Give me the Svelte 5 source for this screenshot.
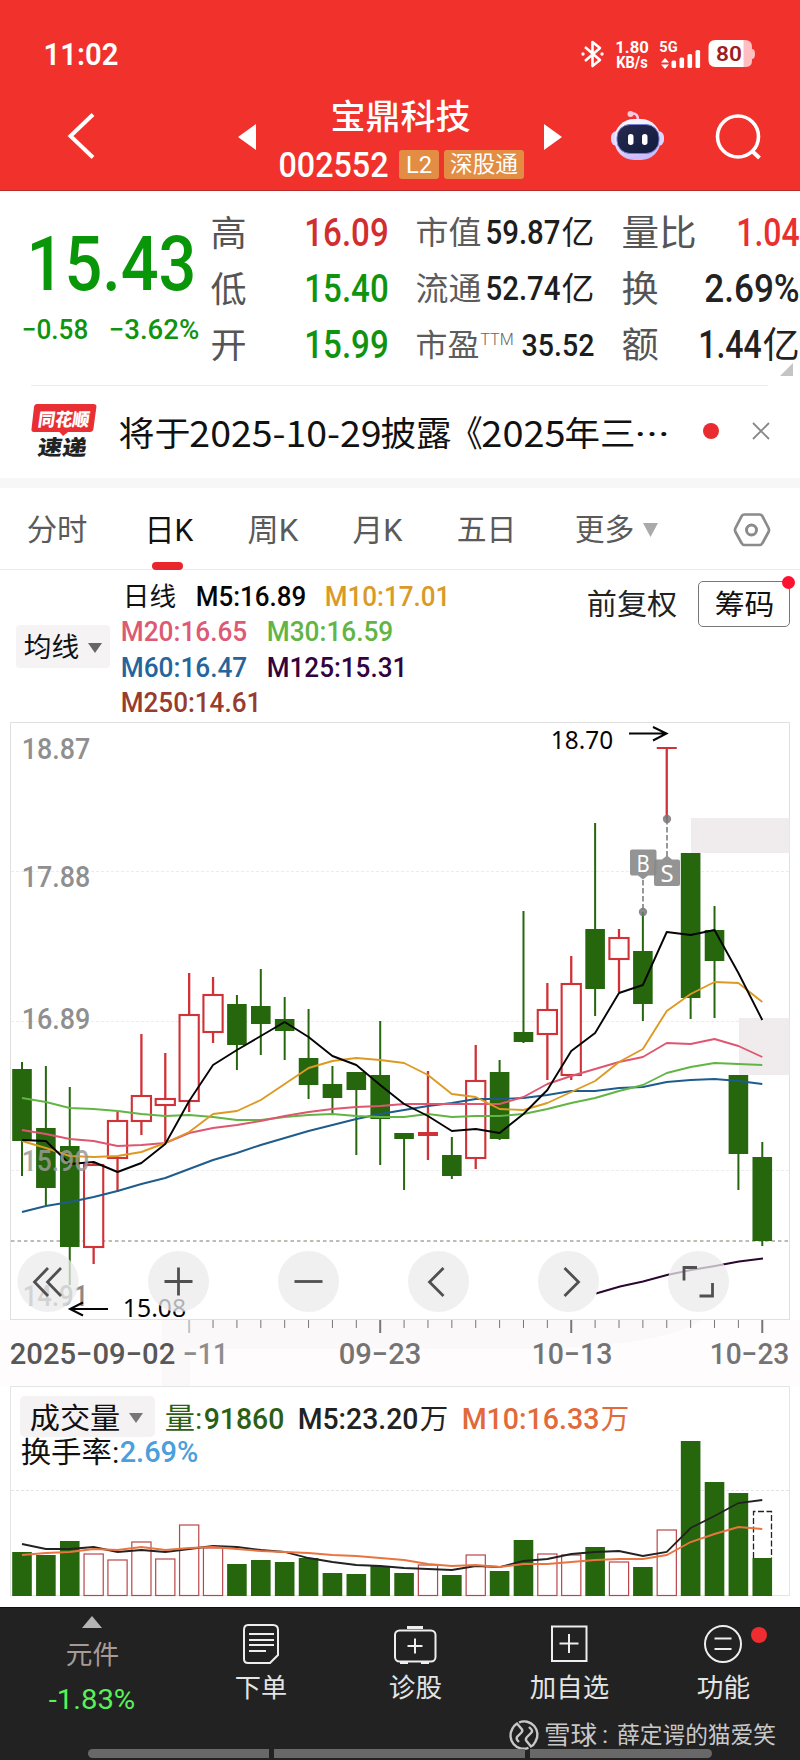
<script>
  const G = '#26670e';
  const R = '#cf3338';
  const cx = (i) => 22 + 23.88 * i;

  // kind, high, body top, body bottom, low
  const candles = [
    ['g', 1062, 1069, 1141, 1176], ['g', 1066, 1128, 1188, 1205], ['g', 1087, 1146, 1247, 1285],
    ['r', 1163, 1165, 1247, 1264], ['r', 1112, 1121, 1158, 1192], ['r', 1034, 1096, 1121, 1135],
    ['r', 1053, 1099, 1105, 1142], ['r', 973, 1015, 1101, 1112], ['r', 977, 995, 1032, 1043],
    ['g', 995, 1004, 1045, 1070], ['g', 969, 1006, 1024, 1055], ['g', 997, 1019, 1031, 1060],
    ['g', 1009, 1058, 1085, 1099], ['g', 1066, 1084, 1098, 1113], ['g', 1072, 1072, 1090, 1155],
    ['g', 1021, 1075, 1119, 1165], ['g', 1133, 1133, 1139, 1190], ['d', 1071, 1132, 1136, 1160],
    ['g', 1137, 1155, 1176, 1179], ['r', 1045, 1081, 1158, 1169], ['g', 1060, 1072, 1139, 1140],
    ['g', 911, 1032, 1042, 1043], ['r', 983, 1010, 1034, 1080], ['r', 956, 984, 1075, 1080],
    ['g', 823, 929, 989, 1016], ['r', 929, 938, 959, 992], ['g', 912, 951, 1004, 1021],
    ['d', 748, 747, 749, 819], ['g', 853, 853, 998, 1019], ['g', 906, 930, 961, 1018],
    ['g', 1075, 1075, 1154, 1190], ['g', 1142, 1157, 1241, 1246]
  ];
  const averages = [
    ['#1d5c8c', [1212,1206,1202,1197,1191,1184,1178,1169,1160,1153,1145,1138,1131,1125,1119,1114,1110,1106,1103,1099,1099,1098,1095,1091,1091,1088,1087,1082,1080,1079,1081,1084]],
    ['#62b544', [1098,1102,1108,1109,1111,1114,1116,1115,1117,1120,1120,1117,1115,1114,1116,1117,1117,1114,1117,1116,1116,1114,1109,1103,1098,1091,1085,1073,1067,1063,1064,1065]],
    ['#de5670', [1130,1134,1139,1141,1146,1145,1143,1133,1128,1125,1121,1116,1112,1109,1107,1106,1104,1104,1104,1104,1104,1097,1084,1076,1069,1062,1057,1043,1044,1039,1046,1057]],
    ['#dc9a22', [1141,1148,1156,1157,1156,1152,1143,1132,1114,1111,1100,1084,1068,1061,1058,1060,1063,1075,1094,1097,1109,1110,1103,1092,1081,1062,1049,1011,994,982,983,1002]],
    ['#050505', [1140,1141,1164,1162,1172,1163,1144,1101,1065,1050,1036,1022,1037,1056,1065,1085,1104,1116,1131,1129,1133,1114,1090,1051,1033,993,985,932,935,930,973,1020]]
  ];
  const volumes = [1552,1555,1541,1554,1560,1542,1559,1525,1548,1564,1560,1562,1558,1573,1574,1566,1573,1565,1575,1555,1571,1540,1554,1555,1547,1562,1567,1530,1441,1482,1493,1558];
  const vma5 = [1544,1549,1549,1547,1552,1550,1552,1549,1546,1547,1550,1552,1558,1562,1565,1566,1568,1569,1570,1566,1567,1561,1559,1554,1552,1551,1556,1552,1528,1516,1503,1500];
  const vma10 = [1555,1553,1552,1549,1550,1547,1550,1548,1547,1549,1551,1552,1553,1555,1556,1558,1560,1564,1566,1565,1567,1564,1564,1562,1560,1559,1559,1555,1542,1534,1527,1529];
  const line = (a) => a.map((y, i) => `${cx(i)},${y}`).join(' ');
  const ticks = Array.from({ length: 25 }, (_, k) => k + 7);
  const buttons = [48, 178.5, 308.5, 438.5, 568.5, 698.5];
  const weightOf = (text) => (/\d/.test(text) ? 500 : 400);
</script>

{#snippet T(text, w, fs, fill = '#222', weight = weightOf(text), x = 0, base = 0, family = 'Roboto, "Noto Sans CJK SC", sans-serif')}
  <svg class="t" {x} y={base - fs * 0.711} width={w} height={fs * 0.711}>
    <text x={-fs * 0.045} y={fs * 0.711} textLength={w + fs * 0.09} lengthAdjust="spacingAndGlyphs"
      font-size={fs} {fill} font-weight={weight} font-family={family}>{text}</text>
  </svg>
{/snippet}

<div class="screen">
  <header>
    <div class="status">
      {@render T('11:02', 72, 31, '#fff', 600)}
      <svg width="180" height="30" viewBox="577 39 180 30">
        <path d="M585 47l15 13-7.500 6V42l7.500 6-15 13" fill="none" stroke="#fff" stroke-width="2.600" stroke-linejoin="round" />
        <circle cx="583" cy="54" r="1.700" fill="#fff" /><circle cx="602" cy="54" r="1.700" fill="#fff" />
        {@render T('1.80', 32, 16.5, '#fff', 700, 616, 53)}
        {@render T('KB/s', 30, 16, '#fff', 700, 617, 68)}
        {@render T('5G', 17, 15, '#fff', 700, 660, 51.5)}
        <path d="M661 62.500l4-4.500 4 4.500zM661 64.500h8l-4 4.500z" fill="#fff" />
        <rect x="671.500" y="60.500" width="4.600" height="7.500" rx="1.500" fill="#fff" />
        <rect x="679.500" y="57.500" width="4.600" height="10.500" rx="1.500" fill="#fff" />
        <rect x="687.500" y="54" width="4.600" height="14" rx="1.500" fill="#fff" />
        <rect x="695.500" y="50" width="4.600" height="18" rx="1.500" fill="#fff" />
        <path d="M743 40h2q7 0 7 7v14q0 6-7 6h-2zM752 49q3 0 3 5t-3 5z" fill="#ffbfc0" />
        <path d="M743.500 40h-28q-7 0-7 7v13q0 7 7 7h28z" fill="#fff" />
        {@render T('80', 24, 21, '#9c201e', 600, 717, 61)}
      </svg>
    </div>
    <div class="nav">
      <svg width="30" height="50" viewBox="65 111 30 50"><path d="M92 114.500L69.500 136 92 157.500" fill="none" stroke="#fff" stroke-width="4" /></svg>
      <svg class="prev" width="18" height="28"><path d="M0 14L18 1v26z" fill="#fff" /></svg>
      <div class="name">
        {@render T('宝鼎科技', 137, 34, '#fff', 500)}
        <div class="code">
          {@render T('002552', 107, 35, '#fff', 500)}
          <span class="tag l2">{@render T('L2', 24, 24, '#fff', 400)}</span>
          <span class="tag hk">{@render T('深股通', 66, 22.5, '#fff')}</span>
        </div>
      </div>
      <svg class="next" width="18" height="28"><path d="M18 14L0 1v26z" fill="#fff" /></svg>
      <svg class="robot" width="54" height="50" viewBox="611 111 54 50">
        <defs>
          <linearGradient id="shell" x1="0" y1="0" x2="0.300" y2="1"><stop offset="0" stop-color="#fff" /><stop offset="0.600" stop-color="#e6defb" /><stop offset="1" stop-color="#cbbcfb" /></linearGradient>
          <linearGradient id="visor" x1="0" y1="0" x2="1" y2="1"><stop offset="0" stop-color="#272b50" /><stop offset="1" stop-color="#101b3c" /></linearGradient>
        </defs>
        <path d="M630 114q8-2 8 6" fill="none" stroke="#f5c8e8" stroke-width="2.500" />
        <circle cx="630.500" cy="114" r="3" fill="#ffc7da" />
        <rect x="611" y="131" width="53" height="15" rx="6" fill="#dcd6ff" />
        <rect x="614.500" y="119" width="46" height="41" rx="19.500" fill="url(#shell)" />
        <rect x="617" y="124.500" width="42" height="29" rx="13" fill="url(#visor)" stroke="#7780d8" />
        <rect x="628" y="134" width="5.500" height="11" rx="2.700" fill="#fff" />
        <rect x="642" y="134" width="5.500" height="11" rx="2.700" fill="#fff" />
      </svg>
      <svg class="search" width="46" height="46" viewBox="714 115 46 46"><circle cx="737" cy="136.500" r="20.500" fill="none" stroke="#fff" stroke-width="3.600" /><path d="M751 151l7.500 7" stroke="#fff" stroke-width="4" /></svg>
    </div>
  </header>

  <section class="quote">
    <div class="price">
      {@render T('15.43', 163, 75.5, '#099709', 500)}
      <div class="delta">{@render T('−0.58', 64, 28, '#109410')}{@render T('−3.62%', 88, 28, '#109410')}</div>
    </div>
    <div class="col ohl">
      <div>{@render T('高', 33, 35, '#555')}{@render T('16.09', 81, 38, '#d22e30')}</div>
      <div>{@render T('低', 33, 35, '#555')}{@render T('15.40', 81, 38, '#109410')}</div>
      <div>{@render T('开', 33, 35, '#555')}{@render T('15.99', 81, 38, '#109410')}</div>
    </div>
    <div class="col cap">
      <div>{@render T('市值', 63, 32, '#5c5c5c')}<span>{@render T('59.87', 72, 33, '#1d1d1d')}{@render T('亿', 30, 32, '#1d1d1d')}</span></div>
      <div>{@render T('流通', 63, 32, '#5c5c5c')}<span>{@render T('52.74', 72, 33, '#1d1d1d')}{@render T('亿', 30, 32, '#1d1d1d')}</span></div>
      <div><span class="pe">{@render T('市盈', 61, 31, '#5c5c5c')}<sup>{@render T('TTM', 32, 16.5, '#666', 300)}</sup></span>{@render T('35.52', 70, 32, '#1d1d1d')}</div>
    </div>
    <div class="col rt">
      <div>{@render T('量比', 72, 36, '#555')}{@render T('1.04', 60, 38, '#ea2f2f')}</div>
      <div>{@render T('换', 34, 36, '#555')}{@render T('2.69%', 92, 38, '#222')}</div>
      <div>{@render T('额', 34, 36, '#555')}<span>{@render T('1.44', 60, 38, '#222')}{@render T('亿', 34, 36, '#222')}</span></div>
      <svg class="corner" width="13" height="13"><path d="M13 0v13H0z" fill="#c4c4c4" /></svg>
    </div>
  </section>

  <section class="news">
    <svg width="66" height="56" viewBox="31 404 66 56">
      <path d="M37 405h56q4 0 3.400 3l-3 22q-0.600 3-3.400 3H68l-5 4-3.500-4H34q-3 0-2.500-3l2.500-22q0.500-3 3-3z" fill="#e92f33" />
      <g transform="translate(43 0) skewX(-8)">
        {@render T('同花顺', 50, 18, '#fff', 900, 55, 427)}
        {@render T('速递', 47, 21, '#222', 900, 59, 456)}
      </g>
    </svg>
    <div class="headline">
      {@render T('将于', 69, 34, '#111')}
      {@render T('2025-10-29', 189, 36.5, '#111', 400, 0, 0, '"Noto Sans CJK SC", sans-serif')}
      {@render T('披露', 68, 34, '#111')}
      {@render T('《', 29, 36, '#111')}
      {@render T('2025', 81, 36.5, '#111', 400, 0, 0, '"Noto Sans CJK SC", sans-serif')}
      {@render T('年三', 68, 34, '#111')}
      {@render T('···', 32, 36, '#111')}
    </div>
    <i class="dot"></i>
    <svg width="18" height="18"><path d="M1 1l16 16M17 1L1 17" stroke="#888" stroke-width="1.800" /></svg>
  </section>

  <nav class="tabs">
    {@render T('分时', 58, 30, '#5a5a5a')}
    <span class="on">{@render T('日K', 46, 31, '#111')}<i></i></span>
    {@render T('周K', 48, 31, '#5a5a5a')}
    {@render T('月K', 47, 31, '#5a5a5a')}
    {@render T('五日', 57, 30, '#5a5a5a')}
    <span class="more">{@render T('更多', 57, 30, '#5a5a5a')}<svg width="15" height="14"><path d="M0 0h15L7.500 14z" fill="#aaa" /></svg></span>
    <svg class="gear" width="37" height="35" viewBox="733 511 37 35"><path d="M744.500 513.500h15q2 0 3 1.800l6 11.700q1 2 0 4l-6 11q-1 2-3 2h-15q-2 0-3-2l-6-11q-1-2 0-4l6-11.700q1-1.800 3-1.800z" fill="none" stroke="#8b8b8b" stroke-width="2.700" /><circle cx="751.500" cy="529" r="5" fill="none" stroke="#8b8b8b" stroke-width="3" /></svg>
  </nav>

  <section class="legend">
    <div class="pick">{@render T('均线', 53, 27, '#111')}<svg width="14" height="10"><path d="M0 0h14L7 10z" fill="#666" /></svg></div>
    <div class="mas">
      <div class="first">{@render T('日线', 51, 26, '#111')}{@render T('M5:16.89', 108, 28, '#050505')}{@render T('M10:17.01', 123, 28, '#d99a27')}</div>
      <div>{@render T('M20:16.65', 124, 28, '#dc5a74')}{@render T('M30:16.59', 124, 28, '#62b544')}</div>
      <div>{@render T('M60:16.47', 124, 28, '#25659b')}{@render T('M125:15.31', 138, 28, '#33033d')}</div>
      <div>{@render T('M250:14.61', 138, 28, '#983c2d')}</div>
    </div>
    <div class="tools">
      {@render T('前复权', 88, 29, '#222')}
      <div class="chips">{@render T('筹码', 57, 28.5, '#111')}<i></i></div>
    </div>
  </section>

  <svg class="chart" width="800" height="664" viewBox="0 722 800 664">
    <rect x="0" y="1320" width="800" height="66" fill="#fffcfd" />
    <path d="M162 1320h540q-40 27-180 29H190v37h-28z" fill="#faf8f9" />
    <rect x="10.500" y="722.500" width="779" height="597" fill="#fff" stroke="#e0e0e0" />
    <path d="M11 871.500h778M11 1021.500h778M11 1170.500h778" stroke="#ececec" stroke-dasharray="3 2" />
    <rect x="691" y="818" width="98.500" height="35" fill="#f0ecee" />
    <rect x="739" y="1018" width="50.500" height="57" fill="#f0ecee" />
    <path d="M11 1241h778" stroke="#aaa79f" stroke-width="1.300" stroke-dasharray="3.500 3" />

    {#each candles as [k, h, t, b, l], i}
      {#if k === 'g'}
        <path d="M{cx(i)} {h}V{l}" stroke={G} stroke-width="2" />
        <rect x={cx(i) - 9.8} y={t} width="19.600" height={b - t} fill={G} />
      {:else if k === 'r'}
        <path d="M{cx(i)} {h}V{t}M{cx(i)} {b}V{l}" stroke={R} stroke-width="2.300" />
        <rect x={cx(i) - 9.6} y={t} width="19.200" height={b - t} fill="#fff" stroke={R} stroke-width="2.100" />
      {:else}
        <path d="M{cx(i)} {h}V{l}" stroke={R} stroke-width="2.300" />
        <rect x={cx(i) - 10} y={t} width="20" height={b - t} fill={R} />
      {/if}
    {/each}

    {#each averages as [c, pts]}
      <polyline points={line(pts)} fill="none" stroke={c} stroke-width="1.900" stroke-linejoin="round" />
    {/each}
    <path d="M596 1293.500L620 1286.500 643 1281.500 667 1275 691 1270 715 1266 739 1261.500 763 1258.500" fill="none" stroke="#2a0630" stroke-width="1.900" />

    {@render T('18.87', 66, 29, '#8f8f8f', 500, 23, 759)}
    {@render T('17.88', 66, 29, '#8f8f8f', 500, 23, 887)}
    {@render T('16.89', 66, 29, '#8f8f8f', 500, 23, 1028.5)}
    <g opacity="0.850">{@render T('15.90', 65, 29, '#9a9a98', 500, 23, 1170.5)}</g>
    {@render T('14.91', 63, 29, '#8a8a8a', 500, 24, 1305.5)}

    {@render T('18.70', 60, 26, '#050505', 400, 552, 749, '"Noto Sans", sans-serif')}
    <path d="M629 733.500h38M653 727l13.500 6.500-13.500 7" fill="none" stroke="#050505" stroke-width="2" />
    {@render T('15.08', 61, 26, '#050505', 400, 124, 1317, '"Noto Sans", sans-serif')}
    <path d="M108 1309H70M83 1302.500L70 1309l13 6.500" fill="none" stroke="#050505" stroke-width="2" />

    <path d="M643 880v32M667 819v38" stroke="#777" stroke-width="1.500" stroke-dasharray="5.500 2.500" />
    <circle cx="643" cy="912" r="4.200" fill="#777" opacity="0.850" />
    <circle cx="667" cy="819" r="4.200" fill="#777" opacity="0.850" />
    <path d="M632 849.500h22.500q2 0 2 2v22q0 2-2 2H648l-5 4-5-4h-6q-2 0-2-2v-22q0-2 2-2z" fill="#888" opacity="0.900" />
    <path d="M656 859.500h6l5-4 5 4h6q2 0 2 2V884q0 2-2 2h-22q-2 0-2-2v-22.500q0-2 2-2z" fill="#888" opacity="0.900" />
    {@render T('B', 11, 24, '#fff', 400, 637.5, 872, '"Noto Sans", sans-serif')}
    {@render T('S', 11, 24, '#fff', 400, 661.5, 882, '"Noto Sans", sans-serif')}

    {#each buttons as x}
      <circle cx={x} cy="1281.500" r="30.500" fill="#ebebeb" opacity="0.750" />
    {/each}
    <g fill="none" stroke="#505050" stroke-width="2.800">
      <path d="M48 1268L34.500 1282 48 1296M61 1268L47.500 1282 61 1296" />
      <path d="M164.500 1281.500h28M178.500 1267.500v28" />
      <path d="M294.500 1281.500h28" />
      <path d="M443.500 1268L429.500 1282 443.500 1296" />
      <path d="M564.500 1268l14 14-14 14" />
      <path d="M697 1267.500h-13v13M699.500 1296h13v-13" />
    </g>

    {#each ticks as i}
      <path d="M{cx(i)} 1320v{(i - 7) % 8 ? 8 : 13}" stroke={i === 7 ? '#c4c4c4' : '#777'} stroke-width={(i - 7) % 8 ? 1 : 2} />
    {/each}
    {@render T('2025−09−02', 163, 29, '#585858', 500, 11, 1364)}
    {@render T('−11', 43, 29, '#8d8d8d', 500, 184, 1364)}
    {@render T('09−23', 80, 29, '#747474', 500, 340, 1364)}
    {@render T('10−13', 78, 29, '#747474', 500, 533, 1364)}
    {@render T('10−23', 77, 29, '#747474', 500, 711, 1364)}
  </svg>

  <section class="volume">
    <svg width="800" height="221" viewBox="0 1386 800 221">
      <rect x="10.500" y="1386.500" width="779" height="209" fill="#fff" stroke="#e4e4e4" />
      <path d="M11 1490.500h778" stroke="#e4e4e4" stroke-dasharray="3 2" />
      {#each volumes as v, i}
        {#if candles[i][0] === 'g'}
          <rect x={cx(i) - 9.8} y={v} width="19.600" height={1596 - v} fill={G} />
        {:else}
          <rect x={cx(i) - 9.6} y={v} width="19.200" height={1595.5 - v} fill="#fff" stroke="#ba464a" stroke-width="1.200" />
        {/if}
      {/each}
      <path d="M753.500 1558v-46.500h18V1558" fill="none" stroke="#222" stroke-width="1.300" stroke-dasharray="6 2.500" />
      <polyline points={line(vma5)} fill="none" stroke="#222" stroke-width="1.800" />
      <polyline points={line(vma10)} fill="none" stroke="#ea7440" stroke-width="1.900" />
    </svg>
    <div class="vhead">
      <div class="vrow">
        <div class="vpick">{@render T('成交量', 88, 29, '#111')}<svg width="14" height="10"><path d="M0 0h14L7 10z" fill="#777" /></svg></div>
        <span>{@render T('量:', 35, 29, '#2c5f16')}{@render T('91860', 78, 30, '#2c5f16')}</span>
        <span>{@render T('M5:23.20', 118, 30, '#222')}{@render T('万', 26, 28, '#222')}</span>
        <span>{@render T('M10:16.33', 135, 30, '#e26a3a')}{@render T('万', 26, 28, '#e26a3a')}</span>
      </div>
      <div class="turn">{@render T('换手率:', 96, 29, '#111')}{@render T('2.69%', 76, 30, '#4a9fdc')}</div>
    </div>
  </section>

  <footer>
    <div class="actions">
      <div class="sector">
        <svg width="20" height="12"><path d="M10 0L0 12h20z" fill="#b5b5b5" /></svg>
        {@render T('元件', 51, 26, '#a89b96')}
        {@render T('-1.83%', 84, 28.5, '#5af05a', 400)}
      </div>
      <div class="act">
        <svg width="38" height="42" viewBox="242 1623 38 42" fill="none" stroke="#eee" stroke-width="2"><path d="M248 1625h25q5 0 5 5v25l-8 8h-22q-4 0-4-4v-29q0-5 4-5z" /><path d="M249 1634h25M249 1640h25M249 1645h25M249 1651h17" /></svg>
        {@render T('下单', 50, 26, '#e4e4e4')}
      </div>
      <div class="act">
        <svg width="44" height="42" viewBox="393 1623 44 42" fill="none" stroke="#eee" stroke-width="2"><rect x="395" y="1630.500" width="40.500" height="31" rx="4.500" /><path d="M407 1627.500h16M400 1662.500h8M421 1662.500h8" stroke-width="3" /><path d="M407.500 1646h15M415 1638.500v15" /></svg>
        {@render T('诊股', 51, 26, '#e4e4e4')}
      </div>
      <div class="act">
        <svg width="38" height="42" viewBox="549.500 1623 38 42" fill="none" stroke="#eee" stroke-width="2"><path d="M551.500 1626.500h34.500v34.500h-34.500zM559 1643.500h19M568.500 1634v19" /></svg>
        {@render T('加自选', 77, 26, '#e4e4e4')}
      </div>
      <div class="act">
        <svg width="40" height="42" viewBox="703 1623 40 42" fill="none" stroke="#eee" stroke-width="2"><circle cx="723" cy="1644" r="18" /><path d="M714.500 1638.500h17M714.500 1649h17" /></svg>
        {@render T('功能', 51, 26, '#e4e4e4')}
        <i></i>
      </div>
    </div>
    <div class="credit">
      <svg width="30" height="30" viewBox="-15 -15 30 30" fill="none" stroke="#c8c8c8" stroke-width="2.400"><path d="M-5-12.500A13.200 13.200 0 0 1 11.500 6.500Q9.500 10.500 7 11.500L2.500 6Q1 4 3 2L7-2Q9-4 7-6L5-8M4.500 12.800A13.200 13.200 0 0 1-11.500-6.500Q-10-9.500-7-11.500L-2-5.500Q-1-4-3-2L-7 2Q-8 4-6 6L-5 7" /></svg>
      {@render T('雪球', 51, 25, '#c8c8c8')}
      {@render T(':', 4, 24, '#c8c8c8')}
      {@render T('薛定谔的猫爱笑', 157, 23, '#c8c8c8')}
    </div>
    <div class="bar"><i></i><i></i><i></i></div>
  </footer>
</div>

<style>
  :global(body) { background: #fff; }
  .screen { width: 800px; height: 1760px; overflow: hidden; background: #fff; font-family: Roboto, "Noto Sans CJK SC", sans-serif; display: flex; flex-direction: column; }
  .screen > * { flex: none; }
  svg { display: block; flex: none; overflow: visible; }
  header { height: 190px; box-sizing: content-box; background: #f1312b; border-bottom: 1px solid #b92a2a; }
  .status { height: 69px; box-sizing: border-box; padding: 39px 43px 0 45px; display: flex; justify-content: space-between; align-items: center; }
  .nav { height: 121px; display: flex; align-items: flex-start; padding: 0 39px 0 66px; }
  .nav > svg:first-child { margin-top: 42px; }
  .prev { margin: 54px 0 0 142px; }
  .name { width: 244px; margin: 36px 0 0 24px; display: flex; flex-direction: column; align-items: center; }
  .name > :global(svg) { margin-right: 4px; }
  .code { width: 100%; display: flex; align-items: center; margin-top: 20px; height: 30px; }
  .tag { height: 29px; box-sizing: border-box; display: flex; align-items: center; background: #e28d43; border-radius: 3px; }
  .l2 { width: 40px; padding-left: 8px; margin-left: 12px; }
  .hk { width: 80px; padding-left: 7px; margin-left: 5px; }
  .next { margin: 54px 0 0 20px; }
  .robot { margin: 42px 0 0 49px; }
  .search { margin: 46px 0 0 50px; }

  .quote { height: 194px; display: grid; grid-template-columns: 212px 175px 206px 205px; }
  .price { padding: 45px 0 0 30px; }
  .delta { display: flex; gap: 23px; margin: 29px 0 0 -7px; }
  .col { display: flex; flex-direction: column; gap: 29px; padding-top: 28px; position: relative; }
  .col > div { height: 27px; display: flex; align-items: flex-end; justify-content: space-between; }
  .col > div > span { display: flex; gap: 4.5px; align-items: flex-end; }
  .cap { padding-left: 30px; }
  .cap > div { height: 25px; padding-bottom: 2px; }
  .cap > div > .pe { gap: 3px; }
  sup { align-self: flex-start; margin: 0 0 11px; line-height: 0; font-size: 16px; }
  .rt { padding-left: 30px; }
  .corner { position: absolute; right: 5px; top: 172px; }

  .news { box-sizing: border-box; height: 93px; padding-bottom: 2px; display: flex; align-items: center; margin: 0 32px 0 31px; border-top: 1px solid #ededed; }
  .headline { display: flex; align-items: flex-end; gap: 2px; margin: 5px 0 0 23px; width: 583px; flex: none; }
  .dot { width: 16px; height: 16px; border-radius: 50%; background: #e92c2f; flex: none; }
  .news > svg:last-child { margin-left: 33px; }

  .tabs { box-sizing: border-box; border-top: 10px solid #f7f7f7; border-bottom: 1px solid #ececec; display: flex; align-items: flex-start; padding: 31px 0 0 28px; height: 92px; }
  .on { margin: 0 57px 0 60px; display: flex; flex-direction: column; align-items: center; }
  .on i { width: 31px; height: 8px; border-radius: 4px; background: #e8262b; margin: 21px 4px 0 0; }
  .on + :global(svg) { margin-right: 57px; }
  .on + :global(svg) + :global(svg) { margin-right: 57px; }
  .more { display: flex; gap: 10px; margin-left: 61px; align-items: center; }
  .gear { margin: -7px 0 0 75px; }

  .legend { height: 152px; display: flex; align-items: flex-start; padding-left: 16px; }
  .pick { width: 94px; height: 43px; box-sizing: border-box; margin-top: 55px; padding: 2px 9px 0; display: flex; align-items: center; gap: 10px; background: #f6f3f5; border-radius: 4px; }
  .mas { margin: 16px 0 0 12px; width: 466px; display: flex; flex-direction: column; gap: 15.4px; }
  .mas div { display: flex; gap: 21.5px; align-items: flex-end; }
  .mas .first { padding-left: 2px; }
  .tools { display: flex; align-items: center; gap: 22px; margin-top: 11px; }
  .chips { width: 92px; height: 46px; box-sizing: border-box; border: 1px solid #777; border-radius: 5px; display: flex; align-items: center; justify-content: center; position: relative; padding-top: 2px; }
  .chips i { position: absolute; width: 13px; height: 13px; border-radius: 50%; right: -6px; top: -6px; background: #fa1230; }

  .volume { display: grid; height: 221px; }
  .volume > * { grid-area: 1 / 1; }
  .vhead { padding: 10px 0 0 20px; }
  .vrow { display: flex; gap: 16px; }
  .vrow > span { display: flex; align-items: flex-end; height: 33px; gap: 4px; }
  .vrow > span:nth-child(2) { margin-left: -5px; }
  .vpick { width: 135px; height: 41px; box-sizing: border-box; display: flex; align-items: center; gap: 10px; padding: 3px 0 0 11px; background: #f5f2f4; border-radius: 5px; }
  .turn { display: flex; align-items: flex-end; gap: 3px; margin: 4px 0 0 2px; }

  footer { height: 153px; background: #222; border-top: 1px solid #111; box-sizing: border-box; }
  .actions { height: 112px; display: grid; grid-template-columns: 184px 154px 154px 154px 154px; }
  .sector, .act { display: flex; flex-direction: column; align-items: center; position: relative; }
  .sector { padding-top: 8px; }
  .sector :global(svg:nth-child(2)) { margin-top: 17px; }
  .sector :global(svg:nth-child(3)) { margin-top: 26px; }
  .act { padding-top: 15px; gap: 13px; }
  .act i { position: absolute; width: 16px; height: 16px; border-radius: 50%; background: #ef2c2f; left: 105px; top: 19px; }
  .credit { height: 30px; display: flex; align-items: center; padding-left: 509px; }
  .credit > :global(svg:nth-child(2)) { margin-left: 6px; }
  .credit > :global(svg:nth-child(3)) { margin-left: 7px; }
  .credit > :global(svg:nth-child(4)) { margin-left: 11px; }
  .bar { display: flex; gap: 5px; padding-left: 88px; height: 9px; margin-top: -1px; }
  .bar i { background: #686868; width: 251px; }
  .bar i:first-child { width: 181px; border-radius: 5px 0 0 5px; }
  .bar i:last-child { width: 182px; border-radius: 0 5px 5px 0; }
</style>
